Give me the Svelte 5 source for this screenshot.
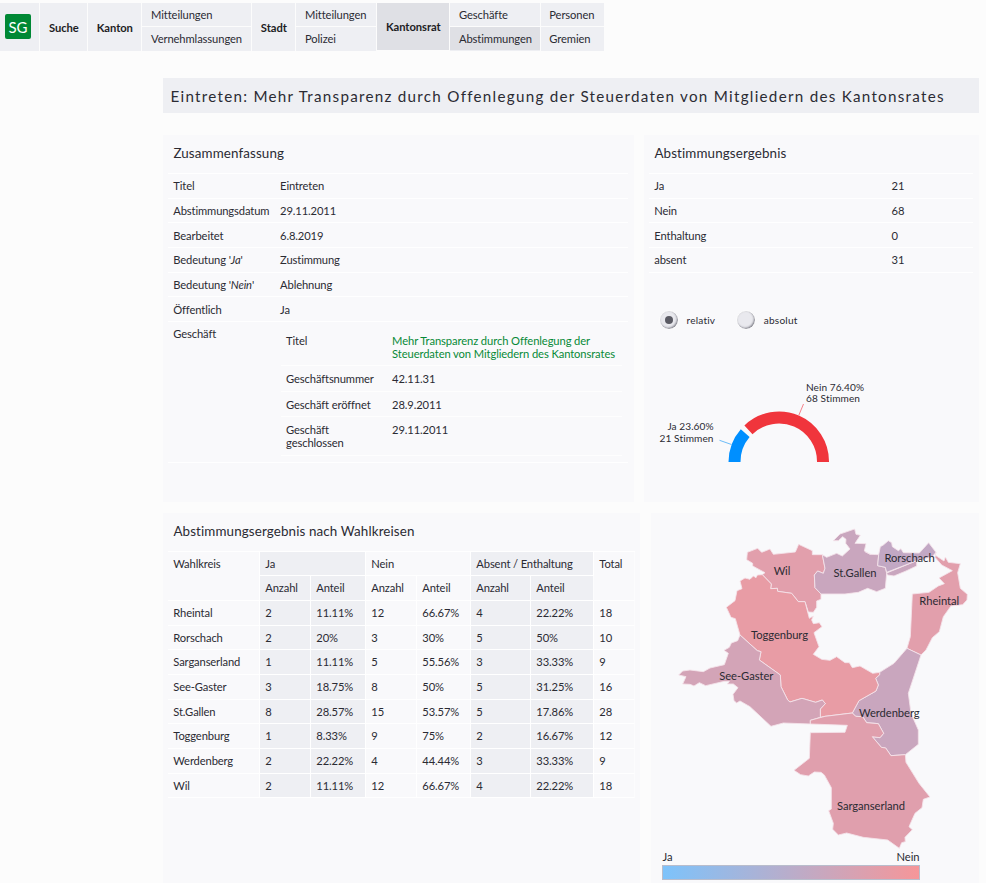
<script>
  const nav = [
    { w: 40, logo: true },
    { w: 48, head: 'Suche' },
    { w: 54, head: 'Kanton' },
    { w: 110, items: ['Mitteilungen', 'Vernehmlassungen'] },
    { w: 44, head: 'Stadt' },
    { w: 81, items: ['Mitteilungen', 'Polizei'] },
    { w: 73, head: 'Kantonsrat', active: true },
    { w: 91, items: ['Geschäfte', 'Abstimmungen'] },
    { w: 63, items: ['Personen', 'Gremien'] }
  ];
  const result = [['Ja', 21], ['Nein', 68], ['Enthaltung', 0], ['absent', 31]];
  const rows = [
    ['Rheintal', 2, '11.11%', 12, '66.67%', 4, '22.22%', 18],
    ['Rorschach', 2, '20%', 3, '30%', 5, '50%', 10],
    ['Sarganserland', 1, '11.11%', 5, '55.56%', 3, '33.33%', 9],
    ['See-Gaster', 3, '18.75%', 8, '50%', 5, '31.25%', 16],
    ['St.Gallen', 8, '28.57%', 15, '53.57%', 5, '17.86%', 28],
    ['Toggenburg', 1, '8.33%', 9, '75%', 2, '16.67%', 12],
    ['Werdenberg', 2, '22.22%', 4, '44.44%', 3, '33.33%', 9],
    ['Wil', 2, '11.11%', 12, '66.67%', 4, '22.22%', 18]
  ];
  const shaded = [1, 2, 5, 6];
  // District outlines on a grid of three units per pixel
  const regions = [
    { fill: '#e29fac', d: '232,97 263,85 275,97 300,87 310,103 376,96 386,73 427,92 427,104 457,104 465,145 460,160 443,153 433,165 435,203 453,222 453,238 440,243 440,262 430,277 415,276 405,245 385,245 365,220 323,214 322,205 302,206 304,192 277,164 285,158 248,138 248,130 230,119' },
    { fill: '#c9a6be', d: '457,104 470,112 500,100 517,108 540,87 527,70 528,58 518,50 505,62 490,62 510,42 554,27 558,43 571,46 555,70 588,71 583,93 600,103 626,104 623,137 646,142 650,160 646,205 620,215 593,205 565,217 525,222 453,222 435,203 433,165 443,153 460,160 465,145' },
    { fill: '#c9a6be', d: '650,159 740,122 740,138 708,153 672,168 652,165' },
    { fill: '#c2a8c4', d: '626,104 631,80 640,75 655,62 665,68 667,80 685,92 693,86 700,98 748,99 776,68 798,97 787,110 740,122 650,157 646,142 623,137' },
    { fill: '#e29fac', d: '798,97 795,105 822,123 826,111 835,127 871,131 863,158 871,205 892,223 891,240 878,254 843,258 820,290 808,335 787,353 768,390 753,405 711,385 721,350 727,222 777,217 805,198 823,191 807,174 847,152 815,135 795,112' },
    { fill: '#c9a6be', d: '711,385 753,405 715,520 723,580 745,630 745,673 706,704 663,707 647,684 634,682 607,650 630,653 641,640 625,611 590,608 578,590 557,589 547,579 567,542 618,513 625,495 617,475 629,464 629,457 672,430' },
    { fill: '#e89ca5', d: '277,164 304,192 302,206 322,205 323,214 365,220 385,245 405,245 418,295 430,288 425,300 430,311 448,308 456,320 432,338 447,380 430,403 455,418 480,421 500,410 525,428 538,428 547,443 570,438 608,460 629,457 629,464 617,475 625,495 618,513 567,542 547,579 465,589 451,592 451,567 466,551 457,540 437,547 396,535 360,546 353,540 333,500 331,465 268,420 273,395 262,392 210,345 196,296 183,292 169,262 195,242 201,212 216,206 210,183 225,174 240,178 250,168 258,173 262,165' },
    { fill: '#d3a4b7', d: '210,345 262,392 273,395 268,420 331,465 333,500 353,540 360,546 396,535 437,547 457,540 466,551 451,567 451,592 421,601 421,612 340,609 303,619 240,560 210,543 200,549 192,542 189,523 204,503 190,492 172,492 178,484 163,484 107,497 88,488 72,498 60,493 38,492 48,470 26,465 38,453 60,450 100,455 120,444 163,434 175,400 162,391 178,382 184,369 203,362' },
    { fill: '#e09fad', d: '421,612 421,601 465,589 547,579 557,589 578,590 590,608 625,611 641,640 630,653 607,650 634,682 647,684 663,707 706,704 708,727 747,790 780,831 760,838 756,863 735,880 717,920 727,929 705,952 706,965 695,968 688,985 653,960 580,952 530,939 505,945 488,928 490,910 476,872 484,867 484,803 463,765 453,757 433,756 415,768 392,764 372,751 418,715 421,638 525,637 532,616' }
  ];
  const labels = [
    ['Wil', 782, 575], ['St.Gallen', 855, 577], ['Rorschach', 909.5, 562], ['Rheintal', 939.2, 605],
    ['Toggenburg', 779.5, 639], ['See-Gaster', 746.3, 680], ['Werdenberg', 889.3, 717], ['Sarganserland', 871, 810]
  ];
  let mode = $state('relativ');
</script>

<nav>
  {#each nav as c}
    <div class="cell" class:active={c.active} style="width:{c.w}px">
      {#if c.logo}
        <span class="logo">SG</span>
      {:else if c.head}
        <b>{c.head}</b>
      {:else}
        {#each c.items as item}
          <a href="#nav" class:current={item === 'Abstimmungen'}>{item}</a>
        {/each}
      {/if}
    </div>
  {/each}
</nav>

<main>
  <h1>Eintreten: Mehr Transparenz durch Offenlegung der Steuerdaten von Mitgliedern des Kantonsrates</h1>
  <div class="line first">
    <section class="summary">
      <h2>Zusammenfassung</h2>
      <dl>
        <div><dt>Titel</dt><dd>Eintreten</dd></div>
        <div><dt>Abstimmungsdatum</dt><dd>29.11.2011</dd></div>
        <div><dt>Bearbeitet</dt><dd>6.8.2019</dd></div>
        <div><dt>Bedeutung '<i>Ja</i>'</dt><dd>Zustimmung</dd></div>
        <div><dt>Bedeutung '<i>Nein</i>'</dt><dd>Ablehnung</dd></div>
        <div><dt>Öffentlich</dt><dd>Ja</dd></div>
        <div class="deal">
          <dt>Geschäft</dt>
          <dd>
            <dl class="inner">
              <div class="r1"><dt>Titel</dt><dd><a href="#deal">Mehr Transparenz durch Offenlegung der<br />Steuerdaten von Mitgliedern des Kantonsrates</a></dd></div>
              <div class="r2"><dt>Geschäftsnummer</dt><dd>42.11.31</dd></div>
              <div class="r3"><dt>Geschäft eröffnet</dt><dd>28.9.2011</dd></div>
              <div class="r4"><dt>Geschäft<br />geschlossen</dt><dd>29.11.2011</dd></div>
            </dl>
          </dd>
        </div>
      </dl>
    </section>
    <section class="result">
      <h2>Abstimmungsergebnis</h2>
      <dl>
        {#each result as [k, v]}
          <div><dt>{k}</dt><dd>{v}</dd></div>
        {/each}
      </dl>
      <div class="radios">
        {#each ['relativ', 'absolut'] as m}
          <button onclick={() => (mode = m)}><span class="knob" class:on={mode === m}></span>{m}</button>
        {/each}
      </div>
      <svg class="donut" width="335" height="115" viewBox="644 370 335 115">
        <path fill="#008fff" d="M728.5 462A50 50 0 0 1 740.8 429.2L749.6 437A38 38 0 0 0 740.5 462Z" />
        <path fill="#f0353c" d="M744.4 425.4A50 50 0 0 1 829 462L817 462A38 38 0 0 0 752.5 434.3Z" />
        <path d="M719.5 440.3L731.5 444.5" stroke="#6cbcf8" fill="none" />
        <path d="M803.5 404L798.5 416" stroke="#f5828a" fill="none" />
        <g class="dtext">
          <text x="806" y="391" textLength="58">Nein 76.40%</text>
          <text x="806" y="402" textLength="54">68 Stimmen</text>
          <text x="667.5" y="430" textLength="46">Ja 23.60%</text>
          <text x="659.5" y="442" textLength="54">21 Stimmen</text>
        </g>
      </svg>
    </section>
  </div>
  <div class="line second">
    <section class="districts">
      <h2>Abstimmungsergebnis nach Wahlkreisen</h2>
      <table>
        <colgroup>
          <col style="width:92px" /><col style="width:51px" /><col style="width:55px" /><col style="width:51px" />
          <col style="width:54px" /><col style="width:60px" /><col style="width:63px" /><col style="width:41px" />
        </colgroup>
        <thead>
          <tr class="top"><th rowspan="2">Wahlkreis</th><th colspan="2" class="sh">Ja</th><th colspan="2">Nein</th><th colspan="2" class="sh">Absent / Enthaltung</th><th rowspan="2">Total</th></tr>
          <tr>{#each [1, 2, 3, 4, 5, 6] as i}<th class:sh={shaded.includes(i)}>{i % 2 ? 'Anzahl' : 'Anteil'}</th>{/each}</tr>
        </thead>
        <tbody>
          {#each rows as r}
            <tr>{#each r as v, i}<td class:sh={shaded.includes(i)}>{v}</td>{/each}</tr>
          {/each}
        </tbody>
      </table>
    </section>
    <section class="map">
      <svg width="328" height="370" viewBox="651 513 328 370">
        <defs>
          <linearGradient id="scale"><stop offset="0" stop-color="#7dc3fb" /><stop offset="1" stop-color="#f69699" /></linearGradient>
        </defs>
        <g transform="translate(670 520) scale(.33333)" stroke="#f4e3ea" stroke-width="2.6" stroke-linejoin="round">
          {#each regions as r}<polygon points={r.d} fill={r.fill} />{/each}
          <path d="M585 95L602 103" />
        </g>
        {#each labels as [t, x, y]}<text {x} {y} text-anchor="middle">{t}</text>{/each}
        <text x="662.5" y="861">Ja</text>
        <text x="919.5" y="861" text-anchor="end">Nein</text>
        <rect x="662.5" y="865.5" width="257" height="14" fill="url(#scale)" stroke="#b9bdcc" />
      </svg>
    </section>
  </div>
</main>

<style>
  :global(body) {
    background: #fcfcfc;
    font: 11.2px/13px Lato, sans-serif;
    letter-spacing: -0.13px;
    color: #2b2b33;
    overflow: hidden;
  }
  :global(*) { box-sizing: border-box; }
  nav { display: flex; height: 51px; padding-top: 3px; }
  .cell {
    display: flex; flex-direction: column; height: 48px;
    background: #eeeff3; border-right: 1px solid #fcfcfc; letter-spacing: -0.1px;
  }
  .cell:last-child { border-right: 0; }
  .cell:last-child a { padding-left: 8.3px; }
  .cell.active { background: #dfe0e5; height: 47px; }
  .cell b { margin: auto; padding-left: 0.6px; color: #1d1d24; letter-spacing: -0.05px; }
  .cell a {
    height: 24px; padding: 5px 0 0 9px; color: #2b2b33; text-decoration: none; line-height: 13px;
  }
  .cell a:first-child { border-bottom: 1px solid #fcfcfc; }
  .cell a.current { background: #dfe0e5; height: 23px; }
  .logo {
    width: 26px; height: 25px; margin: 11px 0 0 5px; border-radius: 2px;
    background: #008835; color: #fff; text-align: center; font-size: 15px; line-height: 26px;
  }
  main { width: 816px; margin: 27px 0 0 163px; }
  h1 {
    margin: 0; height: 35px; padding-left: 7.5px; background: #eeeff3;
    font-size: 15.2px; font-weight: 400; line-height: 37px; letter-spacing: 1.27px; white-space: nowrap;
  }
  h2 {
    margin: 0; padding: 11px 0 0 10.4px; height: 38px;
    font-size: 13.4px; font-weight: 400; line-height: 15px; letter-spacing: 0.12px;
  }
  section { background: #f9f9fb; }
  .line { display: flex; }
  .first { margin-top: 22px; height: 367px; gap: 10px; }
  .second { margin-top: 11px; height: 370px; gap: 11px; }
  .summary { width: 471px; }
  .result { width: 335px; }
  .districts { width: 477px; }
  .map { width: 328px; }
  dl, dd { margin: 0; }
  section > dl { margin: 0 6px 0 5px; border-top: 1px solid #fff; }
  section > dl > div { display: flex; height: 24.67px; padding: 5.3px 0 0 5.3px; border-bottom: 1px solid #fff; }
  .summary > dl > div > dt { width: 106.8px; flex: none; }
  .result > dl > div > dt { width: 237.3px; }
  section > dl > .deal { height: 141px; padding-top: 5px; }
  .inner { width: 341px; margin-left: 1px; padding-top: 7px; }
  .inner > div { display: flex; padding-left: 5px; border-bottom: 1px solid #fefefe; }
  .inner dt { width: 106px; flex: none; }
  .inner .r1 { height: 32px; }
  .inner .r2 { height: 26px; padding-top: 6px; }
  .inner .r3 { height: 25px; padding-top: 6px; }
  .inner .r4 { height: 39px; padding-top: 6px; }
  .inner a { color: #078a37; letter-spacing: -0.1px; text-decoration: none; }
  .radios { display: flex; gap: 20.5px; margin: 37px 0 0 14.5px; height: 20px; }
  button {
    display: flex; align-items: center; gap: 8px; border: 0; padding: 0; background: none;
    font: 10.1px/12px Lato, sans-serif; letter-spacing: 0.2px; color: #2b2b33;
  }
  .knob {
    display: grid; place-items: center; width: 20px; height: 20px; border: 1px solid #fdfdfd;
    border-radius: 50%; background: #e9e9ee; box-shadow: inset -1px -1px 2px #85858e, inset 1px 1px 1px #e4e4e8;
  }
  .knob.on::after { content: ''; width: 8px; height: 8px; border-radius: 50%; background: #5b5b64; }
  .donut { display: block; margin-top: 40px; }
  .dtext { font-size: 10.1px; letter-spacing: 0.01px; fill: #2b2b33; }
  table { width: 467px; margin-left: 5px; table-layout: fixed; border-spacing: 0; border-top: 1px solid #fff; }
  th, td {
    height: 24.67px; padding: 5px 0 0 5.3px; text-align: left; vertical-align: top; font-weight: 400;
    border: solid #fff; border-width: 0 1px 1px 0;
  }
  td { padding-top: 5.15px; }
  .top th[colspan] { height: 24.3px; }
  .sh { background: #eeeff3; }
  th:last-child, td:last-child { border-right-color: #fcfcfd; }
  .map svg { display: block; }
  .map text { font-size: 11.2px; letter-spacing: -0.05px; fill: #2b2b33; }
</style>
